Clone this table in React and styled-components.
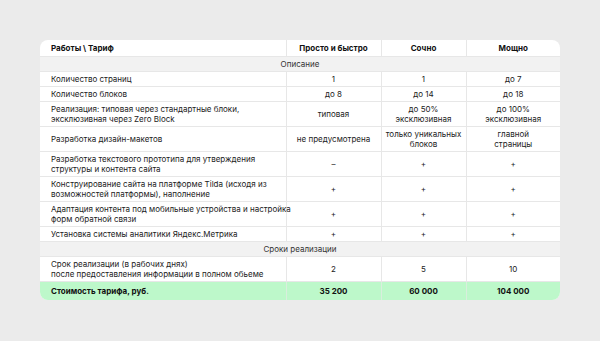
import React from "react";
import styled, { createGlobalStyle } from "styled-components";

const Global = createGlobalStyle`
  html, body { margin: 0; padding: 0; background: #ebebeb; }
  body { font-family: Inter, "Noto Sans", sans-serif; color: #222; }
`;

const Page = styled.div`
  padding: 40px;
  width: 520px;
`;

const Card = styled.div`
  background: #fff;
  border-radius: 8px;
  overflow: hidden;
`;

const Table = styled.table`
  width: 520px;
  border-collapse: collapse;
  table-layout: fixed;
  font-size: 8px;
  line-height: 10px;
`;

const Cell = styled.td`
  padding: 2px 4px;
  border-bottom: 1px solid #e7e7e7;
  border-left: 1px solid #e7e7e7;
  text-align: center;
  vertical-align: middle;
  white-space: nowrap;
  &:first-child {
    border-left: none;
    text-align: left;
    padding-left: 11px;
    padding-right: 2px;
  }
`;

const HeadCell = styled(Cell).attrs({ as: "th" })`
  padding-top: 3px;
  padding-bottom: 3px;
  font-weight: 700;
  color: #111;
`;

const SectionCell = styled.td`
  padding: 2px 4px;
  background: #f2f2f2;
  border-bottom: 1px solid #e7e7e7;
  text-align: center;
  color: #333;
`;

const TotalRow = styled.tr`
  background: #bdf8ca;
  td {
    padding-top: 4px;
    padding-bottom: 4px;
    border-top: 1px solid #6f6f6f;
    border-bottom: none;
    border-left-color: #d9eedd;
    font-weight: 700;
    color: #111;
  }
`;

const rows1 = [
  [["Количество страниц"], ["1"], ["1"], ["до 7"]],
  [["Количество блоков"], ["до 8"], ["до 14"], ["до 18"]],
  [
    ["Реализация: типовая через стандартные блоки,", "эксклюзивная через Zero Block"],
    ["типовая"],
    ["до 50%", "эксклюзивная"],
    ["до 100%", "эксклюзивная"],
  ],
  [["Разработка дизайн-макетов"], ["не предусмотрена"], ["только уникальных", "блоков"], ["главной", "страницы"]],
  [["Разработка текстового прототипа для утверждения", "структуры и контента сайта"], ["–"], ["+"], ["+"]],
  [["Конструирование сайта на платформе Tilda (исходя из", "возможностей платформы), наполнение"], ["+"], ["+"], ["+"]],
  [["Адаптация контента под мобильные устройства и настройка", "форм обратной связи"], ["+"], ["+"], ["+"]],
  [["Установка системы аналитики Яндекс.Метрика"], ["+"], ["+"], ["+"]],
];

const rows2 = [
  [["Срок реализации (в рабочих днях)", "после предоставления информации в полном обьеме"], ["2"], ["5"], ["10"]],
];

const Lines = ({ lines }) =>
  lines.map((l, i) => (
    <React.Fragment key={i}>
      {i > 0 && <br />}
      {l}
    </React.Fragment>
  ));

const Row = ({ cells }) => (
  <tr>
    {cells.map((c, i) => (
      <Cell key={i}>
        <Lines lines={c} />
      </Cell>
    ))}
  </tr>
);

const Section = ({ title }) => (
  <tr>
    <SectionCell colSpan={4}>{title}</SectionCell>
  </tr>
);

export default function App() {
  return (
    <>
      <Global />
      <Page>
        <Card>
          <Table>
            <colgroup>
              <col style={{ width: 246 }} />
              <col style={{ width: 95 }} />
              <col style={{ width: 85 }} />
              <col style={{ width: 94 }} />
            </colgroup>
            <thead>
              <tr>
                <HeadCell>Работы \ Тариф</HeadCell>
                <HeadCell>Просто и быстро</HeadCell>
                <HeadCell>Сочно</HeadCell>
                <HeadCell>Мощно</HeadCell>
              </tr>
            </thead>
            <tbody>
              <Section title="Описание" />
              {rows1.map((r, i) => (
                <Row key={i} cells={r} />
              ))}
              <Section title="Сроки реализации" />
              {rows2.map((r, i) => (
                <Row key={i} cells={r} />
              ))}
              <TotalRow>
                <Cell>Стоимость тарифа, руб.</Cell>
                <Cell>35 200</Cell>
                <Cell>60 000</Cell>
                <Cell>104 000</Cell>
              </TotalRow>
            </tbody>
          </Table>
        </Card>
      </Page>
    </>
  );
}
